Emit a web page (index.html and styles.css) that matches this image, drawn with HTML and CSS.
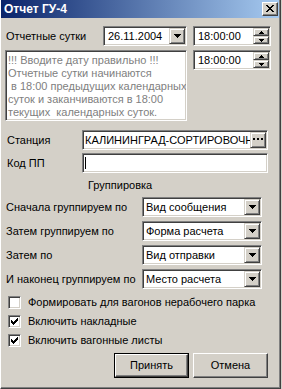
FILE: index.html
```html
<!DOCTYPE html>
<html lang="ru">
<head>
<meta charset="utf-8">
<title>Отчет ГУ-4</title>
<link rel="stylesheet" href="styles.css">
</head>
<body>
<div class="window">
  <div class="titlebar">
    <span class="title">Отчет ГУ-4</span>
    <span class="close-btn">
      <svg width="8" height="7" viewBox="0 0 8 7" shape-rendering="crispEdges">
        <rect x="0" y="0" width="2" height="1"/><rect x="6" y="0" width="2" height="1"/>
        <rect x="1" y="1" width="2" height="1"/><rect x="5" y="1" width="2" height="1"/>
        <rect x="2" y="2" width="4" height="1"/>
        <rect x="3" y="3" width="2" height="1"/>
        <rect x="2" y="4" width="4" height="1"/>
        <rect x="1" y="5" width="2" height="1"/><rect x="5" y="5" width="2" height="1"/>
        <rect x="0" y="6" width="2" height="1"/><rect x="6" y="6" width="2" height="1"/>
      </svg>
    </span>
  </div>
  <div class="client">
    <div class="row row-date">
      <span class="lbl lbl-date">Отчетные сутки</span>
      <div class="field combo date-combo">
        <span class="field-text">26.11.2004</span>
        <span class="drop-btn"><svg width="7" height="4" viewBox="0 0 7 4" shape-rendering="crispEdges"><rect x="0" y="0" width="7" height="1"/><rect x="1" y="1" width="5" height="1"/><rect x="2" y="2" width="3" height="1"/><rect x="3" y="3" width="1" height="1"/></svg></span>
      </div>
      <div class="field spin-field">
        <span class="field-text">18:00:00</span>
        <span class="spin">
          <span class="spin-btn"><svg width="5" height="3" viewBox="0 0 5 3" shape-rendering="crispEdges"><rect x="2" y="0" width="1" height="1"/><rect x="1" y="1" width="3" height="1"/><rect x="0" y="2" width="5" height="1"/></svg></span>
          <span class="spin-btn"><svg width="5" height="3" viewBox="0 0 5 3" shape-rendering="crispEdges"><rect x="0" y="0" width="5" height="1"/><rect x="1" y="1" width="3" height="1"/><rect x="2" y="2" width="1" height="1"/></svg></span>
        </span>
      </div>
    </div>

    <div class="row row-memo">
      <div class="field memo">
<div class="memo-line">!!! Вводите дату правильно !!!</div>
<div class="memo-line">Отчетные сутки начинаются</div>
<div class="memo-line"> в 18:00 предыдущих календарных</div>
<div class="memo-line">суток и заканчиваются в 18:00</div>
<div class="memo-line">текущих  календарных суток.</div>
      </div>
      <div class="field spin-field">
        <span class="field-text">18:00:00</span>
        <span class="spin">
          <span class="spin-btn"><svg width="5" height="3" viewBox="0 0 5 3" shape-rendering="crispEdges"><rect x="2" y="0" width="1" height="1"/><rect x="1" y="1" width="3" height="1"/><rect x="0" y="2" width="5" height="1"/></svg></span>
          <span class="spin-btn"><svg width="5" height="3" viewBox="0 0 5 3" shape-rendering="crispEdges"><rect x="0" y="0" width="5" height="1"/><rect x="1" y="1" width="3" height="1"/><rect x="2" y="2" width="1" height="1"/></svg></span>
        </span>
      </div>
    </div>

    <div class="row row-station">
      <span class="lbl lbl-edit">Станция</span>
      <div class="field edit">
        <span class="field-text station-text">КАЛИНИНГРАД-СОРТИРОВОЧНАЯ</span>
        <span class="ellipsis-btn"><svg width="11" height="2" viewBox="0 0 11 2" shape-rendering="crispEdges"><rect x="0" y="0" width="2" height="2"/><rect x="4" y="0" width="2" height="2"/><rect x="8" y="0" width="2" height="2"/></svg></span>
      </div>
    </div>

    <div class="row row-code">
      <span class="lbl lbl-edit">Код ПП</span>
      <div class="field edit">
        <span class="caret"></span>
      </div>
    </div>

    <div class="group-title">Группировка</div>

    <div class="row row-group first">
      <span class="lbl lbl-group">Сначала группируем по</span>
      <div class="field combo group-combo">
        <span class="field-text">Вид сообщения</span>
        <span class="drop-btn"><svg width="7" height="4" viewBox="0 0 7 4" shape-rendering="crispEdges"><rect x="0" y="0" width="7" height="1"/><rect x="1" y="1" width="5" height="1"/><rect x="2" y="2" width="3" height="1"/><rect x="3" y="3" width="1" height="1"/></svg></span>
      </div>
    </div>
    <div class="row row-group">
      <span class="lbl lbl-group">Затем группируем по</span>
      <div class="field combo group-combo">
        <span class="field-text">Форма расчета</span>
        <span class="drop-btn"><svg width="7" height="4" viewBox="0 0 7 4" shape-rendering="crispEdges"><rect x="0" y="0" width="7" height="1"/><rect x="1" y="1" width="5" height="1"/><rect x="2" y="2" width="3" height="1"/><rect x="3" y="3" width="1" height="1"/></svg></span>
      </div>
    </div>
    <div class="row row-group">
      <span class="lbl lbl-group">Затем по</span>
      <div class="field combo group-combo">
        <span class="field-text">Вид отправки</span>
        <span class="drop-btn"><svg width="7" height="4" viewBox="0 0 7 4" shape-rendering="crispEdges"><rect x="0" y="0" width="7" height="1"/><rect x="1" y="1" width="5" height="1"/><rect x="2" y="2" width="3" height="1"/><rect x="3" y="3" width="1" height="1"/></svg></span>
      </div>
    </div>
    <div class="row row-group">
      <span class="lbl lbl-group">И наконец группируем по</span>
      <div class="field combo group-combo">
        <span class="field-text">Место расчета</span>
        <span class="drop-btn"><svg width="7" height="4" viewBox="0 0 7 4" shape-rendering="crispEdges"><rect x="0" y="0" width="7" height="1"/><rect x="1" y="1" width="5" height="1"/><rect x="2" y="2" width="3" height="1"/><rect x="3" y="3" width="1" height="1"/></svg></span>
      </div>
    </div>

    <div class="row row-check first">
      <span class="checkbox"></span>
      <span class="check-lbl">Формировать для вагонов нерабочего парка</span>
    </div>
    <div class="row row-check">
      <span class="checkbox"><svg width="9" height="9" viewBox="0 0 9 9" shape-rendering="crispEdges"><rect x="1" y="3" width="1" height="3"/><rect x="2" y="4" width="1" height="3"/><rect x="3" y="5" width="1" height="3"/><rect x="4" y="4" width="1" height="3"/><rect x="5" y="3" width="1" height="3"/><rect x="6" y="2" width="1" height="3"/><rect x="7" y="1" width="1" height="3"/></svg></span>
      <span class="check-lbl">Включить накладные</span>
    </div>
    <div class="row row-check">
      <span class="checkbox"><svg width="9" height="9" viewBox="0 0 9 9" shape-rendering="crispEdges"><rect x="1" y="3" width="1" height="3"/><rect x="2" y="4" width="1" height="3"/><rect x="3" y="5" width="1" height="3"/><rect x="4" y="4" width="1" height="3"/><rect x="5" y="3" width="1" height="3"/><rect x="6" y="2" width="1" height="3"/><rect x="7" y="1" width="1" height="3"/></svg></span>
      <span class="check-lbl">Включить вагонные листы</span>
    </div>

    <div class="row row-buttons">
      <button class="btn btn-default" type="button"><span class="btn-inner">Принять</span></button>
      <button class="btn btn-cancel" type="button"><span class="btn-inner">Отмена</span></button>
    </div>
  </div>
</div>
</body>
</html>
```

FILE: styles.css
```css
* {
  box-sizing: border-box;
}

html, body {
  margin: 0;
  padding: 0;
}

body {
  width: 282px;
  height: 389px;
  overflow: hidden;
  background: #d4d0c8;
  font-family: "Liberation Sans", Arial, sans-serif;
  font-size: 11px;
  color: #000;
}

.window {
  width: 281px;
  height: 389px;
  background: #d4d0c8;
  border-left: 1px solid #ffffff;
  border-right: 1px solid #404040;
  border-bottom: 1px solid #404040;
  box-shadow: inset -1px -1px #808080;
  padding: 0 1px 1px 0;
  display: flex;
  flex-direction: column;
}

/* title bar */
.titlebar {
  height: 18px;
  flex: none;
  background: linear-gradient(to right, #0a246a, #a6caf0);
  display: flex;
  align-items: center;
  justify-content: space-between;
  padding-left: 3px;
  padding-right: 1px;
}

.title {
  color: #fff;
  font-weight: bold;
  font-size: 12px;
  line-height: 14px;
}

.close-btn {
  width: 16px;
  height: 14px;
  background: #d4d0c8;
  border: 1px solid;
  border-color: #ffffff #404040 #404040 #ffffff;
  box-shadow: inset -1px -1px #808080;
  display: flex;
  align-items: center;
  justify-content: center;
  padding-right: 1px;
  padding-bottom: 1px;
}

.close-btn svg {
  display: block;
  fill: #000;
}

/* client */
.client {
  display: flex;
  flex-direction: column;
  flex: 1;
}

.row {
  display: flex;
  align-items: center;
  flex: none;
}

.lbl {
  flex: none;
  line-height: 13px;
  white-space: nowrap;
}

/* sunken field */
.field {
  flex: none;
  background: #fff;
  border: 1px solid;
  border-color: #808080 #ffffff #ffffff #808080;
  box-shadow: inset 1px 1px #404040, inset -1px -1px #d4d0c8;
  padding: 1px;
  display: flex;
  align-items: center;
  overflow: hidden;
}

.field-text {
  flex: 1;
  min-width: 0;
  white-space: nowrap;
  overflow: hidden;
  line-height: 13px;
}

/* raised small button */
.drop-btn,
.spin-btn,
.ellipsis-btn {
  flex: none;
  background: #d4d0c8;
  border: 1px solid;
  border-color: #d4d0c8 #404040 #404040 #d4d0c8;
  box-shadow: inset 1px 1px #ffffff, inset -1px -1px #808080;
  display: flex;
  align-items: center;
  justify-content: center;
}

.drop-btn svg,
.spin-btn svg,
.ellipsis-btn svg {
  display: block;
  fill: #000;
}

.combo {
  height: 20px;
}

.combo .field-text {
  padding-left: 2px;
}

.drop-btn {
  width: 16px;
  height: 16px;
}

/* row 1 */
.row-date {
  margin-top: 8px;
  height: 20px;
}

.lbl-date {
  margin-left: 5px;
  width: 97px;
}

.date-combo {
  width: 84px;
}

.date-combo .field-text {
  padding-left: 3px;
}

.spin-field {
  width: 78px;
  height: 20px;
  margin-left: 6px;
}

.spin-field .field-text {
  padding-left: 3px;
}

.spin {
  display: flex;
  flex-direction: column;
  flex: none;
  width: 16px;
  height: 16px;
}

.spin-btn {
  width: 16px;
  height: 8px;
}

/* memo row */
.row-memo {
  margin-top: 4px;
  align-items: flex-start;
}

.memo {
  margin-left: 4px;
  width: 182px;
  height: 71px;
  flex-direction: column;
  align-items: stretch;
  justify-content: flex-start;
  padding: 3px 1px 0 2px;
  color: #808080;
}

.memo-line {
  white-space: pre;
  line-height: 13px;
}

/* station / code */
.row-station {
  margin-top: 9px;
  height: 20px;
}

.row-code {
  margin-top: 3px;
  height: 20px;
}

.lbl-edit {
  margin-left: 6px;
  width: 75px;
}

.edit {
  width: 186px;
  height: 20px;
}

.station-text {
  padding-left: 1px;
  text-overflow: clip;
}

.ellipsis-btn {
  width: 16px;
  height: 16px;
  padding-top: 5px;
  align-items: flex-start;
}

.caret {
  display: block;
  width: 1px;
  height: 12px;
  margin-left: 1px;
  background: #000;
}

/* grouping */
.group-title {
  margin-top: 6px;
  padding-left: 87px;
  line-height: 13px;
  flex: none;
}

.row-group {
  margin-top: 4px;
  height: 20px;
}

.row-group.first {
  margin-top: 5px;
}

.lbl-group {
  margin-left: 5px;
  width: 136px;
}

.group-combo {
  width: 120px;
}

/* checkboxes */
.row-check {
  height: 19px;
}

.row-check.first {
  margin-top: 4px;
}

.checkbox {
  flex: none;
  width: 13px;
  height: 13px;
  margin-left: 7px;
  background: #fff;
  border: 1px solid;
  border-color: #808080 #ffffff #ffffff #808080;
  box-shadow: inset 1px 1px #404040, inset -1px -1px #d4d0c8;
  padding: 1px;
  display: flex;
  align-items: center;
  justify-content: center;
}

.checkbox svg {
  display: block;
  fill: #000;
}

.check-lbl {
  margin-left: 7px;
  line-height: 13px;
  white-space: nowrap;
}

/* buttons */
.row-buttons {
  margin-top: 3px;
  height: 25px;
}

.btn {
  flex: none;
  width: 75px;
  height: 25px;
  padding: 0;
  margin: 0;
  font: inherit;
  color: #000;
  background: #d4d0c8;
  display: flex;
  align-items: center;
  justify-content: center;
}

.btn-default {
  margin-left: 113px;
  border: 1px solid #000;
}

.btn-default .btn-inner {
  width: 100%;
  height: 100%;
  border: 1px solid;
  border-color: #ffffff #404040 #404040 #ffffff;
  box-shadow: inset -1px -1px #808080;
  display: flex;
  align-items: center;
  justify-content: center;
}

.btn-cancel {
  margin-left: 4px;
  border: 1px solid;
  border-color: #ffffff #404040 #404040 #ffffff;
  box-shadow: inset -1px -1px #808080;
}

.btn-inner {
  line-height: 13px;
}
```
